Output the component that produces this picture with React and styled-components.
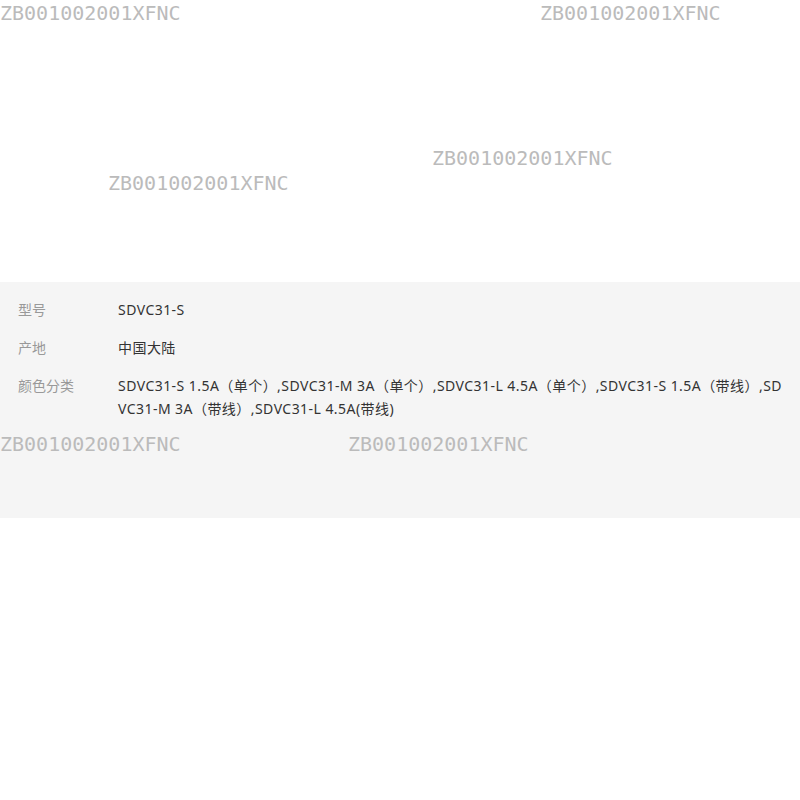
import React from "react";
import styled, { createGlobalStyle } from "styled-components";

const GlobalStyle = createGlobalStyle`
  body {
    margin: 0;
    background: #fff;
    font-family: "Noto Sans", "Noto Sans CJK SC", sans-serif;
  }
`;

const specs = [
  { label: "型号", value: "SDVC31-S" },
  { label: "产地", value: "中国大陆" },
  {
    label: "颜色分类",
    value:
      "SDVC31-S 1.5A（单个）,SDVC31-M 3A（单个）,SDVC31-L 4.5A（单个）,SDVC31-S 1.5A（带线）,SDVC31-M 3A（带线）,SDVC31-L 4.5A(带线)",
  },
];

/* watermark spots, they float over everything */
const marks = [
  { x: 0, y: 3 },
  { x: 540, y: 3 },
  { x: 432, y: 148 },
  { x: 108, y: 173 },
  { x: 0, y: 434 },
  { x: 348, y: 434 },
];

function App() {
  return (
    <Page>
      <GlobalStyle />
      <Gallery />
      <SpecPanel>
        {specs.map((s) => (
          <SpecRow key={s.label}>
            <SpecLabel>{s.label}</SpecLabel>
            <SpecValue>{s.value}</SpecValue>
          </SpecRow>
        ))}
      </SpecPanel>
      {marks.map((m, i) => (
        <Watermark key={i} style={{ left: m.x, top: m.y }}>
          ZB001002001XFNC
        </Watermark>
      ))}
    </Page>
  );
}

export default App;

const Page = styled.div`
  position: relative;
  width: 800px;
  height: 800px;
  overflow: hidden;
`;

const Gallery = styled.div`
  height: 282px;
`;

const SpecPanel = styled.div`
  height: 236px;
  box-sizing: border-box;
  background: #f5f5f5;
  padding: 16px 18px 0 18px;
  display: flex;
  flex-direction: column;
  gap: 15px;
`;

const SpecRow = styled.div`
  display: flex;
  font-size: 14px;
  line-height: 23px;
`;

const SpecLabel = styled.div`
  flex: 0 0 100px;
  color: #999;
`;

const SpecValue = styled.div`
  flex: 1;
  color: #333;
  letter-spacing: 0.45px;
  word-break: break-all;
`;

const Watermark = styled.div`
  position: absolute;
  font-family: "DejaVu Sans Mono", monospace;
  font-size: 20px;
  line-height: 20px;
  color: #bbb;
  white-space: nowrap;
  pointer-events: none;
`;
